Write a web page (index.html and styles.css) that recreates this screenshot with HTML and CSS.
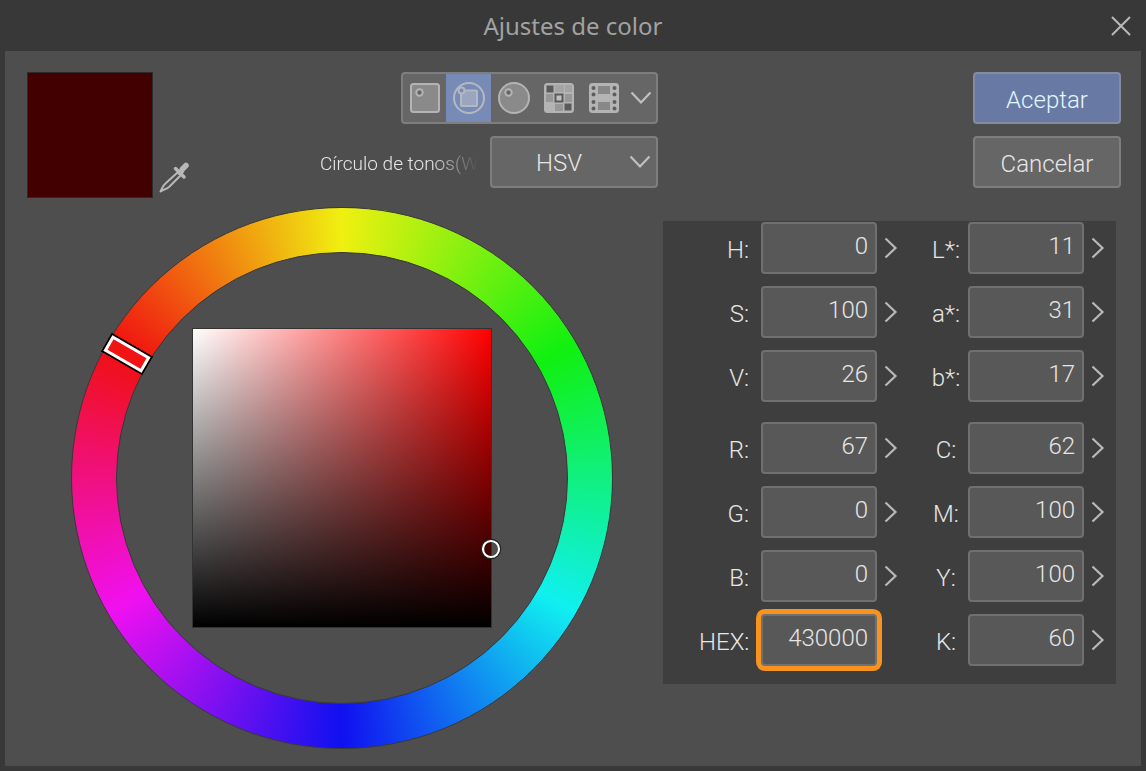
FILE: index.html
```html
<!DOCTYPE html>
<html lang="es">
<head>
<meta charset="utf-8">
<title>Ajustes de color</title>
<link rel="stylesheet" href="styles.css">
</head>
<body>
<svg class="defs" aria-hidden="true">
  <symbol id="chev-right" viewBox="0 0 14 22"><path d="M1.5 1.5 11.5 11 1.5 20.500" fill="none" stroke="#b8b8b8" stroke-width="2.200"/></symbol>
  <symbol id="chev-down" viewBox="0 0 22 14"><path d="M1.500 1.500 11 11.500 20.500 1.500" fill="none" stroke="#c0c0c0" stroke-width="2.200"/></symbol>
</svg>
<main class="dialog">
  <header class="titlebar">
    <h1 class="title">Ajustes de color</h1>
    <button class="close" type="button" aria-label="Cerrar">
      <svg width="20" height="20" viewBox="0 0 20 20"><path d="M1 1 19 19M19 1 1 19" stroke="#b9b9b9" stroke-width="2"/></svg>
    </button>
  </header>
  <form class="body">
    <section class="top">
      <div class="swatch"></div>
      <button class="dropper" type="button" aria-label="Cuentagotas">
        <svg width="32" height="32" viewBox="0 0 32 32">
          <path d="M19.500 11.500 22.500 14.500 11 26C8 28.500 5.500 28.500 2.500 30.500 4.500 27.500 4 25.500 7.500 22.500Z" fill="none" stroke="#b8b8b8" stroke-width="2" stroke-linejoin="round"/>
          <path d="M17.500 7.500 26 16" stroke="#b8b8b8" stroke-width="3.500" stroke-linecap="round"/>
          <path d="M21 13 24.500 9" stroke="#b8b8b8" stroke-width="5"/>
          <path d="M24.500 8 28 4.500" stroke="#b8b8b8" stroke-width="5.500" stroke-linecap="round"/>
        </svg>
      </button>
      <div class="tools">
        <div class="toolbar">
          <button class="tool first" type="button" aria-label="Cuadrado">
            <svg width="32" height="32" viewBox="0 0 32 32"><rect x="2" y="2" width="28" height="28" rx="2.500" fill="#8a8a8a" stroke="#b4b4b4" stroke-width="2"/><circle cx="10.500" cy="10.500" r="3.200" fill="#666" stroke="#b4b4b4" stroke-width="2"/></svg>
          </button>
          <button class="tool active" type="button" aria-label="Círculo de tonos">
            <svg width="32" height="32" viewBox="0 0 32 32"><circle cx="16" cy="16" r="15" fill="none" stroke="#b4b8c2" stroke-width="2"/><rect x="8" y="8.500" width="16" height="15.500" rx="1" fill="#9ba5c0" stroke="#b4b8c2" stroke-width="2"/><circle cx="8.500" cy="8.500" r="3" fill="#788bb6" stroke="#b4b8c2" stroke-width="2"/></svg>
          </button>
          <button class="tool" type="button" aria-label="Esfera">
            <svg width="32" height="32" viewBox="0 0 32 32"><circle cx="16" cy="16" r="15" fill="#8a8a8a" stroke="#b4b4b4" stroke-width="2"/><circle cx="10.500" cy="10.500" r="3.200" fill="#666" stroke="#b4b4b4" stroke-width="2"/></svg>
          </button>
          <button class="tool" type="button" aria-label="Paleta">
            <svg width="32" height="32" viewBox="0 0 32 32"><rect x="1" y="1" width="30" height="30" rx="3.500" fill="#b4b4b4"/><path fill="#5a5a5a" d="M3.500 3.500h7v7h-7zM21.500 21.500h7v7h-7z"/><path fill="#989898" d="M3 12h7v8H3zM22 12h7v8h-7zM12 22h8v7h-8z"/><path fill="#a4a4a4" d="M12 3h9v7h-9zM22 3h7v7h-7z"/><rect x="12.500" y="12.500" width="7" height="7" fill="#c0c0c0" stroke="#5a5a5a" stroke-width="2"/></svg>
          </button>
          <button class="tool" type="button" aria-label="Película">
            <svg width="32" height="32" viewBox="0 0 32 32"><rect x="1" y="1" width="30" height="30" rx="3.500" fill="#b4b4b4"/><path fill="#888" d="M10 4h12v8H10zM10 20h12v8H10z"/><g fill="#5e5e5e"><circle cx="5.500" cy="6" r="2"/><circle cx="5.500" cy="12.500" r="2"/><circle cx="5.500" cy="20" r="2"/><circle cx="5.500" cy="26.500" r="2"/><circle cx="26.500" cy="6" r="2"/><circle cx="26.500" cy="12.500" r="2"/><circle cx="26.500" cy="20" r="2"/><circle cx="26.500" cy="26.500" r="2"/></g></svg>
          </button>
          <button class="tool more" type="button" aria-label="Más"><svg width="22" height="14"><use href="#chev-down"/></svg></button>
        </div>
        <div class="mode">
          <label class="mode-label" for="mode">Círculo de tonos(W</label>
          <div class="select-wrap">
            <select class="select" id="mode"><option>HSV</option></select>
            <svg class="select-arrow" width="22" height="14"><use href="#chev-down"/></svg>
          </div>
        </div>
      </div>
    </section>
    <section class="actions">
      <button class="btn primary" type="submit">Aceptar</button>
      <button class="btn" type="button">Cancelar</button>
    </section>
    <section class="wheel-area">
      <div class="wheel">
        <div class="hole"></div>
        <svg class="hue-mark" viewBox="0 0 48 22"><rect x="1" y="1" width="46" height="20" fill="#f01414" stroke="#000" stroke-width="2"/><rect x="3.500" y="3.500" width="41" height="15" fill="none" stroke="#fff" stroke-width="3"/></svg>
        <div class="shade"></div>
        <svg class="shade-mark" width="22" height="22" viewBox="0 0 22 22"><circle cx="11" cy="11" r="8.500" fill="none" stroke="#222" stroke-width="3.500"/><circle cx="11" cy="11" r="8" fill="none" stroke="#fff" stroke-width="2.200"/></svg>
      </div>
    </section>
    <section class="values">
      <div class="row">
        <label class="name" for="h">H:</label><input class="num" id="h" value="0"><button class="step" type="button" aria-label="H"><svg width="14" height="22"><use href="#chev-right"/></svg></button>
        <label class="name mid" for="l">L*:</label><input class="num" id="l" value="11"><button class="step" type="button" aria-label="L"><svg width="14" height="22"><use href="#chev-right"/></svg></button>
      </div>
      <div class="row">
        <label class="name" for="s">S:</label><input class="num" id="s" value="100"><button class="step" type="button" aria-label="S"><svg width="14" height="22"><use href="#chev-right"/></svg></button>
        <label class="name mid" for="la">a*:</label><input class="num" id="la" value="31"><button class="step" type="button" aria-label="a"><svg width="14" height="22"><use href="#chev-right"/></svg></button>
      </div>
      <div class="row">
        <label class="name" for="v">V:</label><input class="num" id="v" value="26"><button class="step" type="button" aria-label="V"><svg width="14" height="22"><use href="#chev-right"/></svg></button>
        <label class="name mid" for="lb">b*:</label><input class="num" id="lb" value="17"><button class="step" type="button" aria-label="b"><svg width="14" height="22"><use href="#chev-right"/></svg></button>
      </div>
      <div class="row group">
        <label class="name" for="r">R:</label><input class="num" id="r" value="67"><button class="step" type="button" aria-label="R"><svg width="14" height="22"><use href="#chev-right"/></svg></button>
        <label class="name mid" for="c">C:</label><input class="num" id="c" value="62"><button class="step" type="button" aria-label="C"><svg width="14" height="22"><use href="#chev-right"/></svg></button>
      </div>
      <div class="row">
        <label class="name" for="g">G:</label><input class="num" id="g" value="0"><button class="step" type="button" aria-label="G"><svg width="14" height="22"><use href="#chev-right"/></svg></button>
        <label class="name mid" for="m">M:</label><input class="num" id="m" value="100"><button class="step" type="button" aria-label="M"><svg width="14" height="22"><use href="#chev-right"/></svg></button>
      </div>
      <div class="row">
        <label class="name" for="b">B:</label><input class="num" id="b" value="0"><button class="step" type="button" aria-label="B"><svg width="14" height="22"><use href="#chev-right"/></svg></button>
        <label class="name mid" for="y">Y:</label><input class="num" id="y" value="100"><button class="step" type="button" aria-label="Y"><svg width="14" height="22"><use href="#chev-right"/></svg></button>
      </div>
      <div class="row">
        <label class="name" for="hex">HEX:</label><input class="num marked" id="hex" value="430000"><span></span>
        <label class="name mid" for="k">K:</label><input class="num" id="k" value="60"><button class="step" type="button" aria-label="K"><svg width="14" height="22"><use href="#chev-right"/></svg></button>
      </div>
    </section>
  </form>
</main>
</body>
</html>
```

FILE: styles.css
```css
* { box-sizing: border-box; }
body {
  margin: 0;
  background: #383838;
  color: #e6e6e6;
  font-family: Roboto, "Liberation Sans", sans-serif;
  font-size: 24px;
  font-weight: 300;
}
button, input, select { font: inherit; color: inherit; margin: 0; }
button { padding: 0; border: 0; background: none; display: flex; align-items: center; justify-content: center; }
.defs { position: absolute; width: 0; height: 0; }

.dialog {
  display: flex;
  flex-direction: column;
  min-height: 100vh;
  padding: 0 5px 5px;
}
.titlebar {
  display: grid;
  grid-template-columns: 40px 1fr 40px;
  align-items: center;
  height: 51px;
}
.title {
  grid-column: 2;
  margin: 0;
  text-align: center;
  font: 400 24px/32px "Noto Sans", sans-serif;
  color: #a2a2a2;
}
.close { height: 40px; }

.body {
  flex: 1;
  display: grid;
  grid-template-columns: 1fr 458px;
  grid-template-rows: auto 1fr;
  column-gap: 5px;
  row-gap: 9px;
  padding: 21px 20px 0 22px;
  background: #4e4e4e;
}
.top { display: flex; }
.swatch {
  width: 126px;
  height: 126px;
  border: 1px solid #2c2c2c;
  background: #430000;
}
.dropper { align-self: flex-end; width: 42px; height: 42px; }
.tools {
  flex: 1;
  display: flex;
  flex-direction: column;
  align-items: flex-end;
  gap: 12px;
}
.toolbar, .btn, .select, .num { border: 2px solid #7e7e7e; border-radius: 4px; }
.toolbar {
  display: flex;
  height: 52px;
  background: #666;
}
.tool { width: 45px; height: 48px; }
.tool.first { width: 43px; }
.tool.more { width: 30px; }
.tool.active { background: #788bb6; }
.mode { display: flex; align-items: center; gap: 12px; }
.mode-label {
  width: 158px;
  padding-top: 2px;
  white-space: nowrap;
  font-size: 19px;
  -webkit-mask-image: linear-gradient(90deg, #000 70%, transparent);
  mask-image: linear-gradient(90deg, #000 70%, transparent);
}
.select-wrap { position: relative; }
.select {
  display: block;
  appearance: none;
  width: 168px;
  height: 52px;
  padding: 2px 30px 0 0;
  text-align: center;
  text-align-last: center;
  background: #666;
}
.select-arrow { position: absolute; right: 7px; top: 19px; pointer-events: none; }

.actions { display: flex; flex-direction: column; align-items: flex-end; gap: 12px; }
.btn { width: 148px; height: 52px; padding-top: 4px; background: #666; }
.btn.primary { background: #6879a4; border-color: #858ba0; color: #e4f6ff; }

.wheel-area { display: flex; justify-content: center; padding-right: 2px; }
.wheel {
  position: relative;
  width: 542px;
  height: 542px;
  border: 1px solid #383838;
  border-radius: 50%;
  background: conic-gradient(#f0f010, #10f010, #10f0f0, #1010f0, #f010f0, #f01010, #f0f010);
}
.hole, .shade, .hue-mark, .shade-mark { position: absolute; }
.hole {
  inset: 44px;
  border: 1px solid #383838;
  border-radius: 50%;
  background: #4e4e4e;
}
.shade {
  inset: 120px;
  border: 1px solid #333;
  background: linear-gradient(transparent, #000), linear-gradient(90deg, #fff, #f00);
}
.hue-mark { left: 31px; top: 135px; width: 48px; height: 22px; transform: rotate(30deg); }
.shade-mark { left: 408px; top: 330px; }

.values {
  align-self: start;
  margin: 14px 5px 0 0;
  padding: 1px 1px 18px 28px;
  display: flex;
  flex-direction: column;
  gap: 12px;
  background: #3e3e3e;
}
.row {
  display: grid;
  grid-template-columns: 62px 116px 47px 44px 116px 31px;
  justify-content: end;
  align-items: center;
}
.name { padding: 4px 12px 0 0; text-align: right; }
.name.mid { padding-right: 0; text-align: center; }
.row.group { margin-top: 8px; }
.num {
  width: 116px;
  height: 52px;
  padding: 0 7px 4px;
  text-align: right;
  background: #585858;
  border-color: #707070;
  outline: 0;
}
.marked { box-shadow: 0 0 0 5px #f7931e; }
.step { width: 28px; height: 52px; }
```
